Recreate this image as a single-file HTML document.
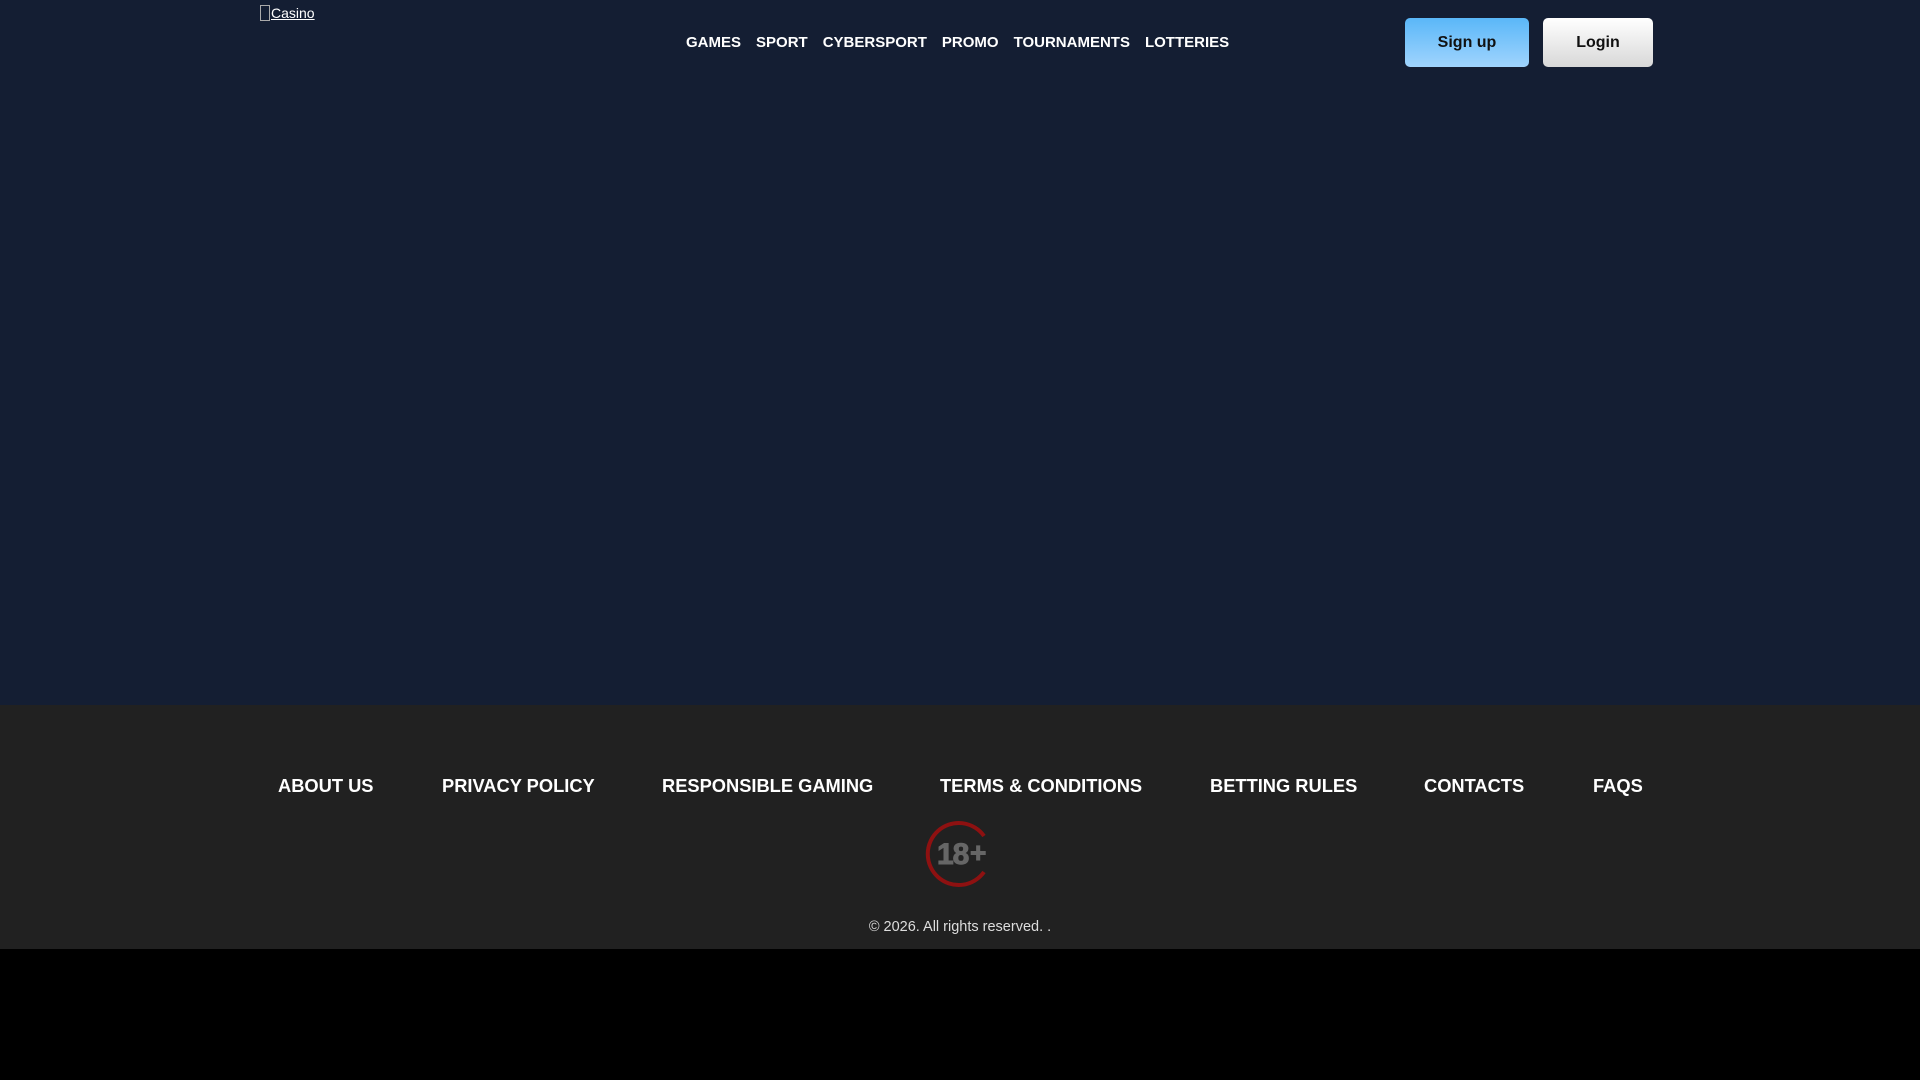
<!DOCTYPE html>
<html><head><meta charset="utf-8"><style>
*{margin:0;padding:0;box-sizing:border-box}
body{width:1920px;height:1080px;background:#000;font-family:"Liberation Sans",Arial,sans-serif;overflow:hidden;position:relative}
.main{position:absolute;left:0;top:0;width:1920px;height:705px;background:#141e33}
.logo{position:absolute;left:260px;top:5px;color:#fff;font-size:14px;text-decoration:underline}
.logo i{display:inline-block;width:10px;height:16px;border:1px solid #aaa;vertical-align:-3px;margin-right:1px}
.nav{position:absolute;top:34px;left:686px;color:#fff;font-size:15px;font-weight:bold;white-space:nowrap}
.nav span{margin-right:15px}
.btn{position:absolute;top:18px;height:49px;border-radius:5px;font-weight:bold;font-size:16px;display:flex;align-items:center;justify-content:center;color:#111}
.su{left:1405px;width:124px;background:linear-gradient(#5ab7f8,#a0d4fd)}
.lo{left:1543px;width:110px;background:linear-gradient(#fff,#d8d8d8)}
.foot{position:absolute;left:0;top:705px;width:1920px;height:244px;background:#212121}
.fl{position:absolute;top:70px;color:#fff;font-weight:bold;font-size:18.3px;white-space:nowrap}
.copy{position:absolute;top:214px;left:0;width:1920px;text-align:center;color:#ddd;font-size:14.5px}
</style></head><body>
<div class="main">
<div class="logo"><i></i>Casino</div>
<div class="nav"><span>GAMES</span><span>SPORT</span><span>CYBERSPORT</span><span>PROMO</span><span>TOURNAMENTS</span><span>LOTTERIES</span></div>
<div class="btn su">Sign up</div>
<div class="btn lo">Login</div>
</div>
<div class="foot">
<div class="fl" style="left:278px">ABOUT US</div>
<div class="fl" style="left:442px">PRIVACY POLICY</div>
<div class="fl" style="left:662px">RESPONSIBLE GAMING</div>
<div class="fl" style="left:940px">TERMS &amp; CONDITIONS</div>
<div class="fl" style="left:1210px">BETTING RULES</div>
<div class="fl" style="left:1424px">CONTACTS</div>
<div class="fl" style="left:1593px">FAQS</div>
<svg style="position:absolute;left:922px;top:114px" width="80" height="70" viewBox="0 0 80 70">
<path d="M62 17 A31 31 0 1 0 62 53" fill="none" stroke="#8e1111" stroke-width="4"/>
<text x="15" y="45" font-family="Liberation Sans,sans-serif" font-weight="bold" font-size="30" fill="#666" stroke="#666" stroke-width="1" letter-spacing="-1">18</text>
<text x="48" y="43" font-family="Liberation Sans,sans-serif" font-weight="bold" font-size="28" fill="#666" stroke="#666" stroke-width="1">+</text>
</svg>
<div class="copy">© 2026. All rights reserved. .</div>
</div>
</body></html>
